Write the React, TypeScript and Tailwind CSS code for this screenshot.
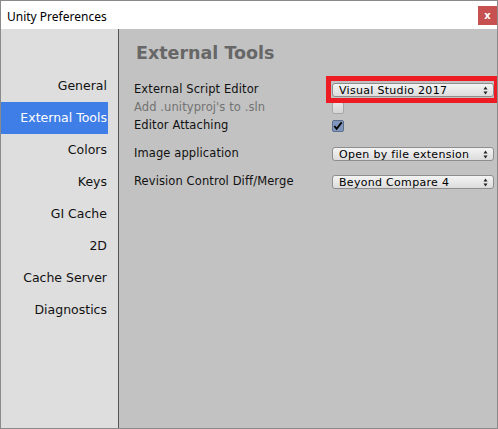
import React from 'react';

const navItems = ['General', 'External Tools', 'Colors', 'Keys', 'GI Cache', '2D', 'Cache Server', 'Diagnostics'];

const Arrows: React.FC = () => (
  <svg width="5" height="9" viewBox="0 0 5 9" className="shrink-0">
    <path d="M2.5 0.5 L4.5 3.5 L0.5 3.5 Z" fill="#222" />
    <path d="M0.5 5.5 L4.5 5.5 L2.5 8.5 Z" fill="#222" />
  </svg>
);

const Dropdown: React.FC<{ value: string }> = ({ value }) => (
  <div className="w-[162px] h-[14px] flex items-center justify-between pl-[6px] pr-[5px] rounded-[3px] border border-[#8e8e8e] bg-gradient-to-b from-[#f4f4f4] to-[#dcdcdc] text-[11px] leading-none text-black">
    <span className="tracking-[0.3px]">{value}</span>
    <Arrows />
  </div>
);

const Checkbox: React.FC<{ checked?: boolean }> = ({ checked }) =>
  checked ? (
    <div className="w-[12px] h-[12px] rounded-[2px] border border-[#5d6f8c] bg-[#7f97bd] flex items-center justify-center">
      <svg width="11" height="10" viewBox="0 0 11 10">
        <path d="M1.5 5 L4 8 L9.5 1" stroke="#000" strokeWidth="2" fill="none" />
      </svg>
    </div>
  ) : (
    <div className="w-[12px] h-[12px] rounded-[2px] border border-[#a8a8a8] bg-gradient-to-b from-[#e8e8e8] to-[#d4d4d4]" />
  );

const Row: React.FC<{ label: string; disabled?: boolean; children: React.ReactNode; className?: string }> = ({
  label,
  disabled,
  children,
  className = '',
}) => (
  <div className={`flex items-center h-[18px] ${className}`}>
    <div className={`w-[198px] text-[11.5px] tracking-[0.1px] ${disabled ? 'text-[#727272]' : 'text-[#111]'}`}>{label}</div>
    {children}
  </div>
);

export default function App() {
  return (
    <div
      className="w-[498px] h-[429px] border border-[#8a8a8a] flex flex-col bg-white overflow-hidden"
      style={{ fontFamily: '"DejaVu Sans", Verdana, sans-serif' }}
    >
      {/* Title bar */}
      <div className="h-[28px] flex items-start justify-between bg-white">
        <span
          className="pl-[6px] pt-[7px] text-[12px] text-black"
          style={{ fontFamily: '"Noto Sans", "Liberation Sans", sans-serif' }}
        >
          Unity Preferences
        </span>
        <div className="mt-[5px] w-[19px] h-[19px] bg-[#c75050] flex items-center justify-center text-white text-[10px] font-bold leading-none">
          x
        </div>
      </div>

      <div className="flex flex-1">
        {/* Sidebar */}
        <div className="w-[118px] bg-[#dedede] border-r border-[#555] pt-[41px]">
          {navItems.map((item) => (
            <div
              key={item}
              className={`mr-[10px] h-[32px] flex items-center justify-end pr-[1px] text-[12.5px] ${
                item === 'External Tools' ? 'bg-[#3f7ee6] text-white' : 'text-[#111]'
              }`}
            >
              {item}
            </div>
          ))}
        </div>

        {/* Main */}
        <div className="flex-1 bg-[#c2c2c2] pl-[15px] pt-[13px]">
          <div className="pl-[2px] h-[22px] text-[17.5px] font-bold text-[#676767] leading-[22px]">External Tools</div>
          <div className="mt-[17px]">
            <Row label="External Script Editor">
              <div className="relative">
                <Dropdown value="Visual Studio 2017" />
                <div className="absolute left-[-6px] top-[-7px] right-[-5px] bottom-[-6px] border-[5px] border-[#ed1c24]" />
              </div>
            </Row>
            <Row label="Add .unityproj's to .sln" disabled>
              <Checkbox />
            </Row>
            <Row label="Editor Attaching">
              <Checkbox checked />
            </Row>
            <Row label="Image application" className="mt-[10px]">
              <Dropdown value="Open by file extension" />
            </Row>
            <Row label="Revision Control Diff/Merge" className="mt-[10px]">
              <Dropdown value="Beyond Compare 4" />
            </Row>
          </div>
        </div>
      </div>
    </div>
  );
}
